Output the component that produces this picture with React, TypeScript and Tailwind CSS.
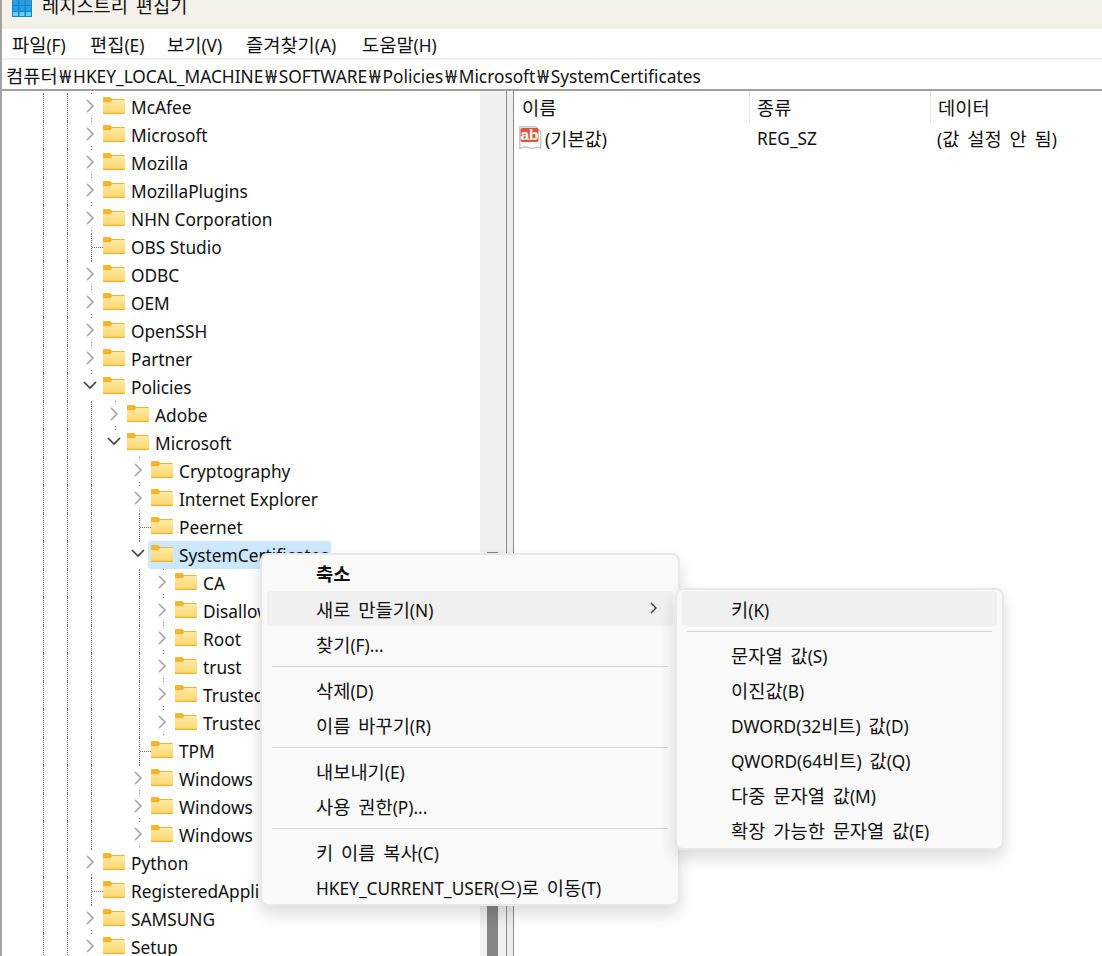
import React from "react";

type Kind = "closed" | "open" | "leaf";
type Guide = "b" | "l";
type Row = { t: string; k: Kind; g: Guide[]; sel?: boolean };

const L0: Guide[] = ["b", "l", "l"];
const L1: Guide[] = ["b", "l", "l", "l"];
const L2: Guide[] = ["b", "l", "l", "l", "b"];
const L3: Guide[] = ["b", "l", "l", "l", "b", "l"];

const rows: Row[] = [
  { t: "McAfee", k: "closed", g: L0 },
  { t: "Microsoft", k: "closed", g: L0 },
  { t: "Mozilla", k: "closed", g: L0 },
  { t: "MozillaPlugins", k: "closed", g: L0 },
  { t: "NHN Corporation", k: "closed", g: L0 },
  { t: "OBS Studio", k: "leaf", g: L0 },
  { t: "ODBC", k: "closed", g: L0 },
  { t: "OEM", k: "closed", g: L0 },
  { t: "OpenSSH", k: "closed", g: L0 },
  { t: "Partner", k: "closed", g: L0 },
  { t: "Policies", k: "open", g: L0 },
  { t: "Adobe", k: "closed", g: L1 },
  { t: "Microsoft", k: "open", g: L1 },
  { t: "Cryptography", k: "closed", g: L2 },
  { t: "Internet Explorer", k: "closed", g: L2 },
  { t: "Peernet", k: "leaf", g: L2 },
  { t: "SystemCertificates", k: "open", g: L2, sel: true },
  { t: "CA", k: "closed", g: L3 },
  { t: "Disallowed", k: "closed", g: L3 },
  { t: "Root", k: "closed", g: L3 },
  { t: "trust", k: "closed", g: L3 },
  { t: "TrustedPublisher", k: "closed", g: L3 },
  { t: "TrustedPeople", k: "closed", g: L3 },
  { t: "TPM", k: "leaf", g: L2 },
  { t: "Windows", k: "closed", g: L2 },
  { t: "Windows", k: "closed", g: L2 },
  { t: "Windows", k: "closed", g: L2 },
  { t: "Python", k: "closed", g: L0 },
  { t: "RegisteredApplications", k: "leaf", g: L0 },
  { t: "SAMSUNG", k: "closed", g: L0 },
  { t: "Setup", k: "closed", g: L0 },
];

function T({ s }: { s: string }) {
  const parts = s.split(/([\uAC00-\uD7A3 ]+|₩)/).filter(Boolean);
  return (
    <>
      {parts.map((p, i) =>
        p === "₩" ? (
          <span key={i} className="inline-block w-[15.5px] text-center">
            ₩
          </span>
        ) : /[\uAC00-\uD7A3 ]/.test(p) ? (
          <span key={i} className="text-[18.7px] [word-spacing:3px]">
            {p}
          </span>
        ) : (
          <span key={i}>{p}</span>
        )
      )}
    </>
  );
}

function Folder() {
  return (
    <svg width="22" height="18" viewBox="0 0 22 18" className="shrink-0 mr-[6px] -mt-[3px]">
      <defs>
        <linearGradient id="fg" x1="0" y1="0" x2="0" y2="1">
          <stop offset="0" stopColor="#fdeba8" />
          <stop offset="1" stopColor="#fcd567" />
        </linearGradient>
      </defs>
      <path d="M0 1.200C0 .5.500 0 1.200 0h5.300c.4 0 .7.100 1 .4L9.400 2H21a1 1 0 0 1 1 1v3H0z" fill="#f4b52c" />
      <path d="M0 5.200 7.400 5.200 9.400 3 22 3V16a1 1 0 0 1-1 1H1a1 1 0 0 1-1-1z" fill="url(#fg)" />
      <rect x="0" y="15.800" width="22" height="1.200" fill="#eeb02f" />
    </svg>
  );
}

function Dot() {
  return <span className="block w-px h-px bg-[#6f6f6f]" />;
}

function Toggle({ kind }: { kind: Kind }) {
  if (kind === "leaf") {
    return (
      <div className="w-[24px] h-full flex shrink-0">
        <div className="ml-[12px] h-full border-l border-dotted border-[#6f6f6f] flex items-center">
          <span className="block w-[11px] border-t border-dotted border-[#6f6f6f]" />
        </div>
      </div>
    );
  }
  return (
    <div className="w-[24px] h-full shrink-0 flex flex-col items-center justify-between pb-[2px]">
      <Dot />
      {kind === "closed" ? (
        <svg width="10" height="16" viewBox="0 0 10 16" className="-ml-[3px]">
          <path d="M2 2l6 6-6 6" fill="none" stroke="#a3a3a3" strokeWidth="1.6" />
        </svg>
      ) : (
        <svg width="16" height="10" viewBox="0 0 16 10" className="-ml-[3px] -mt-[3px]">
          <path d="M2 2l6 6 6-6" fill="none" stroke="#404040" strokeWidth="1.6" />
        </svg>
      )}
      {kind === "closed" ? <Dot /> : <span className="block h-px" />}
    </div>
  );
}

function TreeRow({ r }: { r: Row }) {
  return (
    <div className="flex items-center h-[28px] shrink-0">
      {r.g.map((g, i) => (
        <div key={i} className="w-[24px] h-full shrink-0">
          {g === "l" && <div className="ml-[12px] h-full border-l border-dotted border-[#6f6f6f]" />}
        </div>
      ))}
      <Toggle kind={r.k} />
      <div
        className={
          r.sel
            ? "flex items-center h-full shrink-0 -ml-[3px] pl-[3px] w-[183px] rounded-[3px] bg-[#cce8ff]"
            : "flex items-center h-full shrink-0"
        }
      >
        <Folder />
        <span className="whitespace-nowrap text-[17.3px] text-[#111] leading-none pt-[2px]">{r.t}</span>
      </div>
    </div>
  );
}

function Item({ label, active, bold, arrow, pl }: { label: string; active?: boolean; bold?: boolean; arrow?: boolean; pl: string }) {
  return (
    <div
      className={`flex items-center justify-between h-[35px] rounded-[4px] pr-[14px] whitespace-nowrap text-[#111] text-[17.3px] leading-none ${pl} ${active ? "bg-[#f0f0f0]" : ""} ${bold ? "font-bold pt-[2px]" : "pt-[4px]"}`}
    >
      <span>
        <T s={label} />
      </span>
      {arrow && (
        <svg width="10" height="14" viewBox="0 0 10 14" className="-mt-[6px]">
          <path d="M2 2l5 5-5 5" fill="none" stroke="#333" strokeWidth="1.4" />
        </svg>
      )}
    </div>
  );
}

function Sep() {
  return (
    <div className="h-[11px] flex items-center px-[5px]">
      <div className="w-full h-px bg-[#d6d6d6] -mt-[1px]" />
    </div>
  );
}

function RegistryIcon() {
  return (
    <svg width="21" height="22" viewBox="0 0 21 22" className="shrink-0 -mt-[5px] mr-[9px]">
      <rect x="0" y="3" width="20" height="19" fill="#0f86cf" />
      <g fill="#2a9fe0">
        <rect x="1" y="5" width="5" height="5" />
        <rect x="7.500" y="5" width="5" height="5" />
        <rect x="14" y="5" width="5" height="5" />
        <rect x="1" y="11" width="5" height="5" />
        <rect x="7.500" y="11" width="5" height="5" />
        <rect x="14" y="11" width="5" height="5" />
      </g>
      <g fill="#6fcbf5">
        <rect x="1" y="17" width="5" height="4" />
        <rect x="7.500" y="17" width="5" height="4" />
        <rect x="14" y="17" width="5" height="4" />
      </g>
      <path d="M14 6 20 0l1 4-4 4z" fill="#3f8fc4" />
    </svg>
  );
}

function AbIcon() {
  return (
    <svg width="24" height="24" viewBox="0 0 24 24" className="shrink-0 mr-[2px]">
      <path d="M.8.8h16l5 5v16.400c-2.500-2-4.500-1-6.500-.2s-4 .2-6-.6-4-.8-6 .2l-2.500.8z" fill="#fbfbfb" stroke="#bdbdbd" strokeWidth="1.200" />
      <rect x="1.500" y="2" width="18" height="14" rx="2" fill="#e0583a" />
      <text x="10.500" y="14" textAnchor="middle" fontSize="15.500" fontWeight="700" fill="#ffffff" fontFamily="'Liberation Sans',sans-serif">
        ab
      </text>
    </svg>
  );
}

export default function App() {
  return (
    <div className="relative h-[956px] w-[1102px] overflow-hidden bg-white border-l-2 border-[#a3a3a3] flex flex-col font-['Noto_Sans','Noto_Sans_CJK_KR',sans-serif] text-[#111] text-[17.3px]">
      <div className="h-[29px] shrink-0 bg-[#f4f0ea] overflow-hidden flex items-start pl-[10px]">
        <RegistryIcon />
        <span className="leading-[24px] -mt-[6px] whitespace-nowrap">
          <T s="레지스트리 편집기" />
        </span>
      </div>

      <div className="h-[29px] shrink-0 flex items-center pl-[10px] pt-[3px] whitespace-nowrap leading-none">
        <span className="w-[78px]"><T s="파일(F)" /></span>
        <span className="w-[77px]"><T s="편집(E)" /></span>
        <span className="w-[79px]"><T s="보기(V)" /></span>
        <span className="w-[116px]"><T s="즐겨찾기(A)" /></span>
        <span><T s="도움말(H)" /></span>
      </div>

      <div className="h-[2px] shrink-0 bg-[#f0f0f0]" />

      <div className="h-[29px] shrink-0 flex items-center pl-[4px] pt-[3px] leading-none whitespace-nowrap">
        <span><T s="컴퓨터₩HKEY_LOCAL_MACHINE₩SOFTWARE₩Policies₩Microsoft₩SystemCertificates" /></span>
      </div>

      <div className="h-[2px] shrink-0 bg-[#a0a0a0]" />

      <div className="flex-1 flex min-h-0">
        <div className="w-[504px] shrink-0 flex overflow-hidden">
          <div className="flex-1 flex flex-col pl-[5px] pt-[2px] overflow-hidden">
            {rows.map((r, i) => (
              <TreeRow key={i} r={r} />
            ))}
          </div>
          <div className="w-[26px] shrink-0 bg-[#f0f0f0] flex flex-col pt-[461px] pl-[7px]">
            <div className="w-[11px] flex-1 bg-[#858585]" />
          </div>
        </div>
        <div className="w-[8px] shrink-0 bg-[#eeeeee] border-x border-[#8c8c8c]" />
        <div className="flex-1 min-w-0 leading-none">
          <div className="mt-[1px] flex h-[31px] items-center">
            <div className="w-[236px] h-full pl-[8px] pt-[2px] flex items-center border-r border-[#e5e5e5]"><span><T s="이름" /></span></div>
            <div className="w-[181px] h-full pl-[7px] pt-[2px] flex items-center border-r border-[#e5e5e5]"><span><T s="종류" /></span></div>
            <div className="flex-1 h-full pl-[7px] pt-[2px] flex items-center"><span><T s="데이터" /></span></div>
          </div>
          <div className="flex h-[30px] items-center">
            <div className="w-[236px] pl-[5px] flex items-center">
              <AbIcon />
              <span className="pt-[2px]"><T s="(기본값)" /></span>
            </div>
            <div className="w-[181px] pl-[7px] pt-[2px]">REG_SZ</div>
            <div className="pl-[6px] pt-[2px] whitespace-nowrap"><T s="(값 설정 안 됨)" /></div>
          </div>
        </div>
      </div>

      <div className="absolute left-[258px] top-[553px] w-[420px] h-[353px] bg-[#f9f9f9] border-2 border-[#e8e8e8] rounded-[8px] shadow-[0_8px_16px_rgba(0,0,0,0.14)] pt-[1px] px-[5px]">
        <Item pl="pl-[49px]" label="축소" bold />
        <Item pl="pl-[49px]" label="새로 만들기(N)" active arrow />
        <Item pl="pl-[49px]" label="찾기(F)..." />
        <Sep />
        <Item pl="pl-[49px]" label="삭제(D)" />
        <Item pl="pl-[49px]" label="이름 바꾸기(R)" />
        <Sep />
        <Item pl="pl-[49px]" label="내보내기(E)" />
        <Item pl="pl-[49px]" label="사용 권한(P)..." />
        <Sep />
        <Item pl="pl-[49px]" label="키 이름 복사(C)" />
        <Item pl="pl-[49px]" label="HKEY_CURRENT_USER(으)로 이동(T)" />
      </div>

      <div className="absolute left-[673px] top-[588px] w-[329px] h-[262px] bg-[#f9f9f9] border-2 border-[#e8e8e8] rounded-[8px] shadow-[0_8px_16px_rgba(0,0,0,0.14)] pt-[1px] px-[5px]">
        <Item pl="pl-[49px]" label="키(K)" active />
        <Sep />
        <Item pl="pl-[49px]" label="문자열 값(S)" />
        <Item pl="pl-[49px]" label="이진값(B)" />
        <Item pl="pl-[49px]" label="DWORD(32비트) 값(D)" />
        <Item pl="pl-[49px]" label="QWORD(64비트) 값(Q)" />
        <Item pl="pl-[49px]" label="다중 문자열 값(M)" />
        <Item pl="pl-[49px]" label="확장 가능한 문자열 값(E)" />
      </div>
    </div>
  );
}
